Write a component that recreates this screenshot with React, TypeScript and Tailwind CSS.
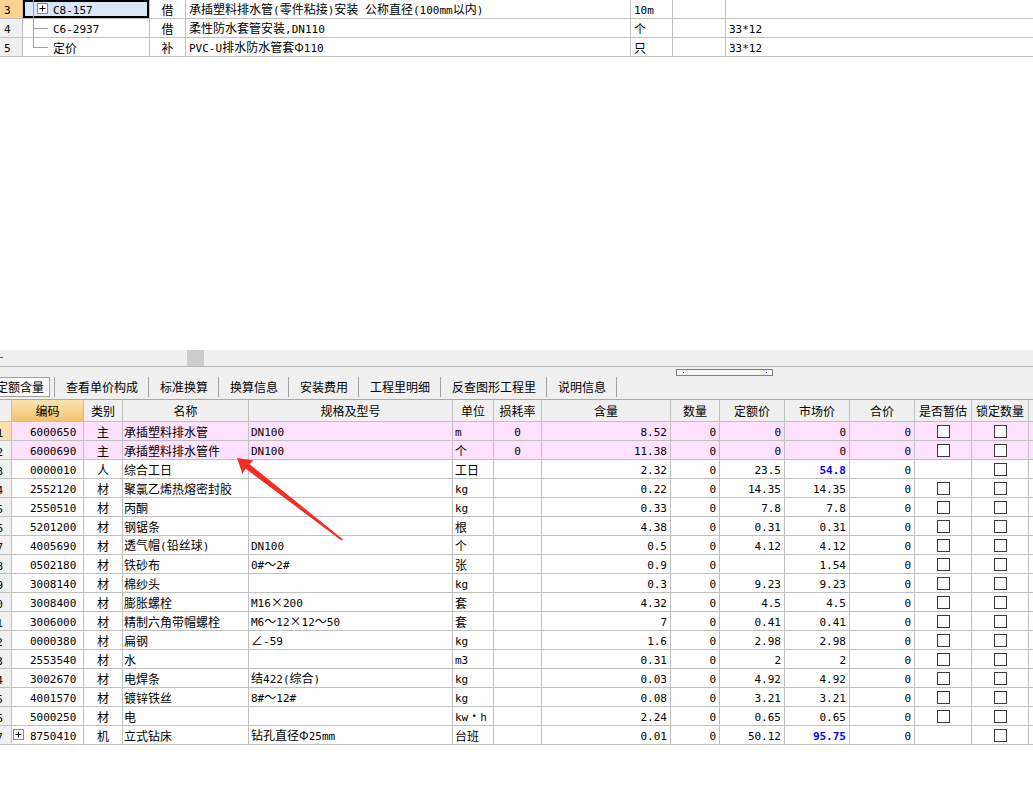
import React from 'react';

// characters that SimSun draws full width go to the CJK face, the rest to a narrow mono face
const WIDE = /[\u00b7\u00d7\u0370-\u03ff\u2200-\u22ff\u3000-\u9fff\uff00-\uffef]/;

function Txt({ s }: { s: string }) {
  const parts: { t: string; w: boolean }[] = [];
  for (const ch of s) {
    const w = WIDE.test(ch);
    const last = parts[parts.length - 1];
    if (last && last.w === w) last.t += ch;
    else parts.push({ t: ch, w });
  }
  return (
    <span className="whitespace-pre font-['Noto_Sans_CJK_SC',sans-serif] text-[12px] leading-[15px]">
      {parts.map((p, i) =>
        p.w ? (
          <span key={i}>{p.t}</span>
        ) : (
          <span key={i} className="font-['DejaVu_Sans_Mono',monospace] text-[11px]">
            {p.t}
          </span>
        )
      )}
    </span>
  );
}

function PlusBox({ x }: { x: number }) {
  return (
    <>
      <rect x={x + 0.5} y={3.5} width={10} height={10} fill="#fff" stroke="#8a8a8a" />
      <line x1={x + 2.5} y1={8.5} x2={x + 8.5} y2={8.5} stroke="#000" />
      <line x1={x + 5.5} y1={5.5} x2={x + 5.5} y2={11.5} stroke="#000" />
    </>
  );
}

const topRows = [
  { n: '3', code: 'C8-157', t: '借', name: '承插塑料排水管(零件粘接)安装 公称直径(100mm以内)', unit: '10m', c7: '', tree: 'plus' },
  { n: '4', code: 'C6-2937', t: '借', name: '柔性防水套管安装,DN110', unit: '个', c7: '33*12', tree: 'mid' },
  { n: '5', code: '定价', t: '补', name: 'PVC-U排水防水管套Φ110', unit: '只', c7: '33*12', tree: 'end' },
];

function TopTable() {
  const c = 'h-[19px] border-r border-b border-[#c0c0c0] flex items-center whitespace-nowrap overflow-hidden';
  return (
    <div className="grid grid-cols-[23px_127px_36px_445px_42px_53px_307px]">
      {topRows.map((r, i) => (
        <React.Fragment key={r.n}>
          <div className={`${c} pl-[4px] ${i === 0 ? 'bg-[#fcd38e]' : 'bg-[#f0f0f0]'}`}>
            <Txt s={r.n} />
          </div>
          <div className={`${c} ${i === 0 ? 'bg-[#d8e7f7] shadow-[inset_0_0_0_2px_#000]' : ''}`}>
            <svg width="30" height="18" className="shrink-0">
              <line x1="10.5" y1="0" x2="10.5" y2={r.tree === 'end' ? 9.5 : 19} stroke="#a0a0a0" />
              {r.tree === 'plus' ? (
                <PlusBox x={14} />
              ) : (
                <line x1="10.5" y1="9.5" x2="25" y2="9.5" stroke="#a0a0a0" />
              )}
            </svg>
            <Txt s={r.code} />
          </div>
          <div className={`${c} justify-center`}>
            <Txt s={r.t} />
          </div>
          <div className={`${c} pl-[3px]`}>
            <Txt s={r.name} />
          </div>
          <div className={`${c} pl-[3px]`}>
            <Txt s={r.unit} />
          </div>
          <div className={c} />
          <div className={`${c} pl-[3px] border-r-0`}>
            <Txt s={r.c7} />
          </div>
        </React.Fragment>
      ))}
    </div>
  );
}

const tabs = ['查看单价构成', '标准换算', '换算信息', '安装费用', '工程里明细', '反查图形工程里', '说明信息'];

function TabBar() {
  return (
    <div className="relative h-[33px] bg-[#f0f0f0] border-b border-[#a8a8a8] flex items-end pb-[2px] font-['Noto_Sans_CJK_SC',sans-serif] text-[12px] leading-[18px]">
      <div className="-ml-[10px] h-[20px] border border-[#a0a0a0] bg-[#fbfbfb] px-[5px] whitespace-nowrap">定额含量</div>
      <div className="ml-[4px] w-px h-[20px] bg-[#a0a0a0]" />
      {tabs.map((t) => (
        <React.Fragment key={t}>
          <div className="h-[20px] pl-[11px] pr-[10px] flex items-center whitespace-nowrap">{t}</div>
          <div className="w-px h-[20px] bg-[#a0a0a0]" />
        </React.Fragment>
      ))}
      {/* splitter grip */}
      <div className="absolute left-[676px] top-[2px] w-[97px] h-[7px] border border-[#808080] bg-[#f4f4f4]">
        <div className="absolute left-[6px] top-[2px] w-px h-px bg-[#1a2a9a]" />
        <div className="absolute left-[89px] top-[2px] w-px h-px bg-[#1a2a9a]" />
      </div>
    </div>
  );
}

type R = [string, string, string, string, string, string, string, string, string, string, boolean, boolean, boolean];
// n, code, cat, name, spec, unit, loss, qty, quota, market, est-box, blue, plus
const rows: R[] = [
  ['1', '6000650', '主', '承插塑料排水管', 'DN100', 'm', '0', '8.52', '0', '0', true, false, false],
  ['2', '6000690', '主', '承插塑料排水管件', 'DN100', '个', '0', '11.38', '0', '0', true, false, false],
  ['3', '0000010', '人', '综合工日', '', '工日', '', '2.32', '23.5', '54.8', false, true, false],
  ['4', '2552120', '材', '聚氯乙烯热熔密封胶', '', 'kg', '', '0.22', '14.35', '14.35', true, false, false],
  ['5', '2550510', '材', '丙酮', '', 'kg', '', '0.33', '7.8', '7.8', true, false, false],
  ['6', '5201200', '材', '钢锯条', '', '根', '', '4.38', '0.31', '0.31', true, false, false],
  ['7', '4005690', '材', '透气帽(铅丝球)', 'DN100', '个', '', '0.5', '4.12', '4.12', true, false, false],
  ['8', '0502180', '材', '铁砂布', '0#～2#', '张', '', '0.9', '', '1.54', true, false, false],
  ['9', '3008140', '材', '棉纱头', '', 'kg', '', '0.3', '9.23', '9.23', true, false, false],
  ['10', '3008400', '材', '膨胀螺栓', 'M16×200', '套', '', '4.32', '4.5', '4.5', true, false, false],
  ['11', '3006000', '材', '精制六角带帽螺栓', 'M6～12×12～50', '套', '', '7', '0.41', '0.41', true, false, false],
  ['12', '0000380', '材', '扁钢', '∠-59', 'kg', '', '1.6', '2.98', '2.98', true, false, false],
  ['13', '2553540', '材', '水', '', 'm3', '', '0.31', '2', '2', true, false, false],
  ['14', '3002670', '材', '电焊条', '结422(综合)', 'kg', '', '0.03', '4.92', '4.92', true, false, false],
  ['15', '4001570', '材', '镀锌铁丝', '8#～12#', 'kg', '', '0.08', '3.21', '3.21', true, false, false],
  ['16', '5000250', '材', '电', '', 'kw·h', '', '2.24', '0.65', '0.65', true, false, false],
  ['17', '8750410', '机', '立式钻床', '钻孔直径Φ25mm', '台班', '', '0.01', '50.12', '95.75', false, true, true],
];

const heads = ['', '编码', '类别', '名称', '规格及型号', '单位', '损耗率', '含量', '数量', '定额价', '市场价', '合价', '是否暂估', '锁定数量', ''];

function Box() {
  return <div className="w-[13px] h-[13px] border border-[#3a3a3a] bg-white" />;
}

function BottomTable() {
  const c = 'border-r border-b border-[#c0c0c0] flex items-center whitespace-nowrap overflow-hidden';
  const num = `${c} justify-end pr-[3px]`;
  return (
    <div className="grid grid-cols-[12px_72px_39px_126px_204px_41px_48px_129px_49px_65px_65px_65px_57px_57px_4px]">
      {heads.map((h, i) => (
        <div
          key={i}
          className={`${c} h-[22px] justify-center font-['Noto_Sans_CJK_SC',sans-serif] text-[12px] ${
            i === 1 ? 'bg-gradient-to-b from-[#fbe3b0] to-[#f3c26c]' : 'bg-[#f0f0f0]'
          } ${i === 14 ? 'border-r-0' : ''}`}
        >
          {h}
        </div>
      ))}
      {rows.map((r, i) => {
        const pink = i < 2;
        const bg = pink ? 'bg-[#fde1fd]' : 'bg-white';
        const row = `h-[19px] ${bg}`;
        return (
          <React.Fragment key={r[0]}>
            <div className={`${c} h-[19px] ${i === 0 ? 'bg-[#fde0ae]' : 'bg-[#f0f0f0]'}`}>
              <div className="w-[40px] -ml-[37px] shrink-0 text-right">
                <Txt s={r[0]} />
              </div>
            </div>
            <div className={`${c} ${row} ${i === 0 ? 'bg-[#d8d4f6]' : ''} ${r[12] ? '' : 'pl-[18px]'}`}>
              {r[12] && (
                <svg width="18" height="18" className="shrink-0">
                  <PlusBox x={1} />
                </svg>
              )}
              <Txt s={r[1]} />
            </div>
            <div className={`${c} ${row} justify-center`}>
              <Txt s={r[2]} />
            </div>
            <div className={`${c} ${row} pl-[1px]`}>
              <Txt s={r[3]} />
            </div>
            <div className={`${c} ${row} pl-[2px]`}>
              <Txt s={r[4]} />
            </div>
            <div className={`${c} ${row} pl-[2px]`}>
              <Txt s={r[5]} />
            </div>
            <div className={`${c} ${row} justify-center`}>
              <Txt s={r[6]} />
            </div>
            <div className={`${num} ${row}`}>
              <Txt s={r[7]} />
            </div>
            <div className={`${num} ${row}`}>
              <Txt s="0" />
            </div>
            <div className={`${num} ${row}`}>
              <Txt s={r[8]} />
            </div>
            <div className={`${num} ${row} ${r[11] ? 'text-[#0000ff] font-bold' : ''}`}>
              <Txt s={r[9]} />
            </div>
            <div className={`${num} ${row}`}>
              <Txt s="0" />
            </div>
            <div className={`${c} ${row} justify-center`}>{r[10] && <Box />}</div>
            <div className={`${c} ${row} justify-center`}>
              <Box />
            </div>
            <div className={`${c} ${row} border-r-0`} />
          </React.Fragment>
        );
      })}
    </div>
  );
}

export default function App() {
  return (
    <div className="relative w-[1033px] h-[802px] overflow-hidden bg-white text-black">
      <TopTable />
      <div className="h-[293px]" />
      {/* horizontal scroll strip */}
      <div className="relative h-[17px] bg-[#f0f0f0] border-b border-[#b8b8b8]">
        <div className="absolute left-0 top-[7px] w-[3px] h-px bg-[#555]" />
        <div className="absolute left-[187px] top-0 w-[17px] h-[16px] bg-[#cdcdcd]" />
      </div>
      <TabBar />
      <BottomTable />
      {/* red annotation arrow */}
      <svg className="absolute inset-0 pointer-events-none" width="1033" height="802">
        <polygon
          points="237,458 253.5,460.5 249.5,464 342.8,539.2 341.4,540.6 245.5,468.5 242.5,474"
          fill="#ef2f26"
        />
      </svg>
    </div>
  );
}
